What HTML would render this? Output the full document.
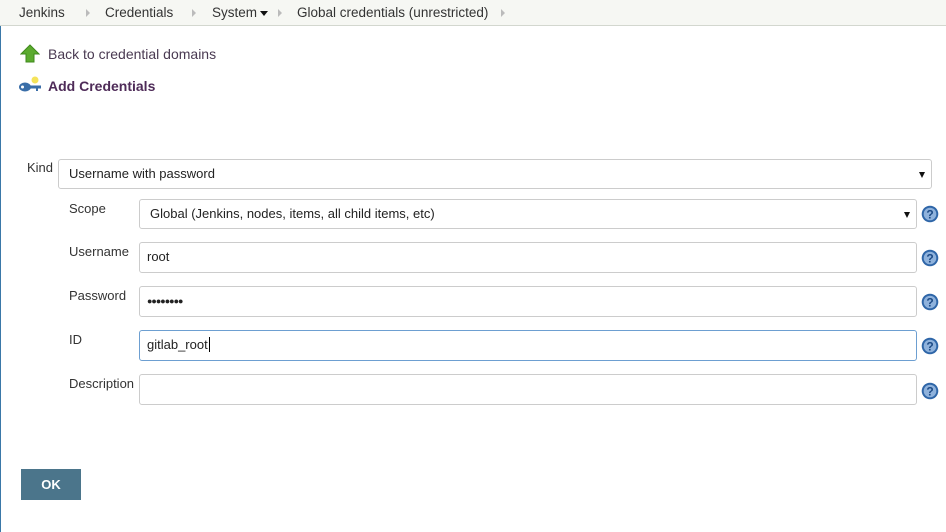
<!DOCTYPE html>
<html><head><style>
body{margin:0;width:946px;height:532px;background:#fff;font-family:"Liberation Sans",sans-serif;font-size:13px;color:#333;position:relative;overflow:hidden}
.bc{position:absolute;left:0;top:0;width:946px;height:25px;background:#f6f7f3;border-bottom:1px solid #d3d7cf}
.bc span{position:absolute;top:5px;font-size:13.5px;color:#333}
.bc i{position:absolute;top:9px;width:0;height:0;border-left:4px solid #bbb;border-top:4px solid transparent;border-bottom:4px solid transparent}
.lb{position:absolute;left:0;top:26px;width:1px;height:506px;background:#3a78a8}
.a{position:absolute;font-size:14px;color:#4a3a52}
.lbl{position:absolute;font-size:13px;color:#333}
.in{position:absolute;box-sizing:border-box;border:1px solid #ccc;border-radius:3px;background:#fff;font-size:13px;color:#222;padding-left:10px;line-height:28px}
.arr{position:absolute;right:6px;top:12px;border-left:3px solid transparent;border-right:3px solid transparent;border-top:6px solid #111}
.h{position:absolute;left:921px;width:18px;height:18px}
.ok{position:absolute;left:21px;top:469px;width:60px;height:31px;background:#4b758b;color:#fff;font-weight:bold;font-size:13px;text-align:center;line-height:31px}
</style></head><body>
<div class="bc">
<span style="left:19px">Jenkins</span><i style="left:86px"></i>
<span style="left:105px">Credentials</span><i style="left:192px"></i>
<span style="left:212px">System</span><i style="left:260px;border:none;border-left:4px solid transparent;border-right:4px solid transparent;border-top:5px solid #111;top:11px"></i><i style="left:278px"></i>
<span style="left:297px">Global credentials (unrestricted)</span><i style="left:501px"></i>
</div>
<div class="lb"></div>
<svg style="position:absolute;left:20px;top:44px" width="20" height="20"><path d="M10 1L19 10H14V18H6V10H1Z" fill="#5bab2e" stroke="#3f8a1c"/></svg>
<div class="a" style="left:48px;top:46px">Back to credential domains</div>
<svg style="position:absolute;left:18px;top:76px" width="24" height="20"><circle cx="17" cy="4" r="3.5" fill="#f5e35a"/><ellipse cx="7" cy="11" rx="6" ry="4.5" fill="#3a6ea8"/><rect x="10" y="9.5" width="13" height="3" fill="#3a6ea8"/><rect x="18" y="12" width="2" height="3" fill="#3a6ea8"/><circle cx="4.5" cy="11" r="1.5" fill="#fff"/></svg>
<div class="a" style="left:48px;top:78px;font-weight:bold;color:#4e2b58">Add Credentials</div>

<div class="lbl" style="left:27px;top:160px">Kind</div>
<div class="in" style="left:58px;top:159px;width:874px;height:30px">Username with password<div class="arr"></div></div>

<div class="lbl" style="left:69px;top:201px">Scope</div>
<div class="in" style="left:139px;top:199px;width:778px;height:30px">Global (Jenkins, nodes, items, all child items, etc)<div class="arr"></div></div>
<div class="lbl" style="left:69px;top:244px">Username</div>
<div class="in" style="left:139px;top:242px;width:778px;height:31px;padding-left:7px">root</div>
<div class="lbl" style="left:69px;top:288px">Password</div>
<div class="in" style="left:139px;top:286px;width:778px;height:31px;padding-left:7px;font-size:9px;letter-spacing:-1px">●●●●●●●●</div>
<div class="lbl" style="left:69px;top:332px">ID</div>
<div class="in" style="left:139px;top:330px;width:778px;height:31px;padding-left:7px;border-color:#6d9fd1">gitlab_root<span style="border-left:1px solid #000;margin-left:1px"></span></div>
<div class="lbl" style="left:69px;top:376px">Description</div>
<div class="in" style="left:139px;top:374px;width:778px;height:31px"></div>

<svg class="h" style="top:205px" viewBox="0 0 18 18"><circle cx="9" cy="9" r="8.3" fill="#2f66a8"/><circle cx="9" cy="9" r="6.3" fill="#8fb2dc"/><text x="9" y="13.5" font-size="12" font-weight="bold" text-anchor="middle" fill="#1d4b86" font-family="Liberation Sans">?</text></svg>
<svg class="h" style="top:249px" viewBox="0 0 18 18"><circle cx="9" cy="9" r="8.3" fill="#2f66a8"/><circle cx="9" cy="9" r="6.3" fill="#8fb2dc"/><text x="9" y="13.5" font-size="12" font-weight="bold" text-anchor="middle" fill="#1d4b86" font-family="Liberation Sans">?</text></svg>
<svg class="h" style="top:293px" viewBox="0 0 18 18"><circle cx="9" cy="9" r="8.3" fill="#2f66a8"/><circle cx="9" cy="9" r="6.3" fill="#8fb2dc"/><text x="9" y="13.5" font-size="12" font-weight="bold" text-anchor="middle" fill="#1d4b86" font-family="Liberation Sans">?</text></svg>
<svg class="h" style="top:337px" viewBox="0 0 18 18"><circle cx="9" cy="9" r="8.3" fill="#2f66a8"/><circle cx="9" cy="9" r="6.3" fill="#8fb2dc"/><text x="9" y="13.5" font-size="12" font-weight="bold" text-anchor="middle" fill="#1d4b86" font-family="Liberation Sans">?</text></svg>
<svg class="h" style="top:382px" viewBox="0 0 18 18"><circle cx="9" cy="9" r="8.3" fill="#2f66a8"/><circle cx="9" cy="9" r="6.3" fill="#8fb2dc"/><text x="9" y="13.5" font-size="12" font-weight="bold" text-anchor="middle" fill="#1d4b86" font-family="Liberation Sans">?</text></svg>

<div class="ok">OK</div>
</body></html>
